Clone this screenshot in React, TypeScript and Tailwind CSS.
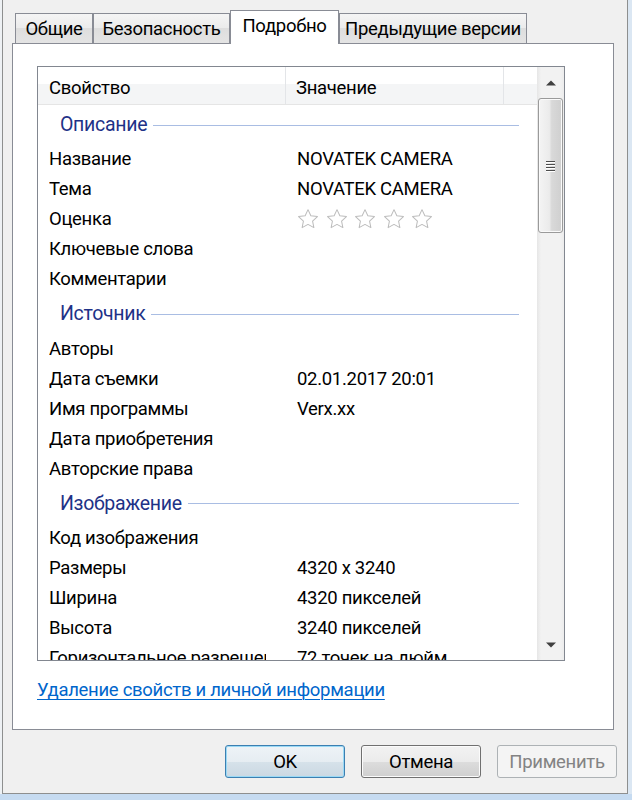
import React from 'react';

type Row =
  | { kind: 'group'; label: string; h: string }
  | { kind: 'item'; name: string; value?: string; stars?: boolean };

const rows: Row[] = [
  { kind: 'group', label: 'Описание', h: 'h-[38px]' },
  { kind: 'item', name: 'Название', value: 'NOVATEK CAMERA' },
  { kind: 'item', name: 'Тема', value: 'NOVATEK CAMERA' },
  { kind: 'item', name: 'Оценка', stars: true },
  { kind: 'item', name: 'Ключевые слова' },
  { kind: 'item', name: 'Комментарии' },
  { kind: 'group', label: 'Источник', h: 'h-[40px]' },
  { kind: 'item', name: 'Авторы' },
  { kind: 'item', name: 'Дата съемки', value: '02.01.2017 20:01' },
  { kind: 'item', name: 'Имя программы', value: 'Verx.xx' },
  { kind: 'item', name: 'Дата приобретения' },
  { kind: 'item', name: 'Авторские права' },
  { kind: 'group', label: 'Изображение', h: 'h-[39px]' },
  { kind: 'item', name: 'Код изображения' },
  { kind: 'item', name: 'Размеры', value: '4320 x 3240' },
  { kind: 'item', name: 'Ширина', value: '4320 пикселей' },
  { kind: 'item', name: 'Высота', value: '3240 пикселей' },
  { kind: 'item', name: 'Горизонтальное разрешение', value: '72 точек на дюйм' },
];

const Star = () => (
  <svg width="22" height="22" viewBox="0 0 24 24">
    <path
      d="M12 1.8l3.1 6.6 7.2.9-5.3 5 1.4 7.1L12 17.9l-6.4 3.5 1.4-7.1-5.3-5 7.2-.9z"
      fill="#fff"
      stroke="#bcbcbc"
      strokeWidth="1.1"
      strokeLinejoin="round"
    />
  </svg>
);

const Arrow = ({ down }: { down?: boolean }) => (
  <svg width="10" height="6" viewBox="0 0 10 6">
    <path d={down ? 'M0 0.5h10L5 5.5z' : 'M0 5.5h10L5 0.5z'} fill="#404040" />
  </svg>
);

const Tab = ({ label, w, active }: { label: string; w: string; active?: boolean }) =>
  active ? (
    <div
      className={`${w} h-[34px] -mb-px relative z-10 bg-white border border-b-0 border-[#898c95] flex items-center justify-center pb-[2px] text-black`}
    >
      {label}
    </div>
  ) : (
    <div
      className={`${w} h-[30px] pt-[2px] bg-[linear-gradient(#f5f5f5,#ebebeb_50%,#dedede_50%,#e4e4e4)] border border-b-0 border-[#898c95] flex items-center justify-center text-black`}
    >
      {label}
    </div>
  );

const Scrollbar = () => (
  <div className="w-[27px] h-full flex flex-col bg-[linear-gradient(90deg,#e6e6e6,#f2f2f2_15%,#f2f2f2_85%,#ececec)]">
    <div className="h-[31px] flex items-center justify-center">
      <Arrow />
    </div>
    <div className="h-[135px] mx-px rounded-[3px] border border-[#9a9a9a] bg-[linear-gradient(90deg,#f4f4f4,#ebebeb_45%,#d9d9d9_55%,#cfcfcf)] shadow-[inset_0_0_0_1px_#fafafa] flex items-center justify-center">
      <div className="flex flex-col gap-[2px]">
        {[0, 1, 2, 3].map((i) => (
          <div key={i} className="w-[9px] h-px bg-[#4d4d4d] shadow-[0_1px_0_#ffffff]" />
        ))}
      </div>
    </div>
    <div className="flex-1" />
    <div className="h-[30px] flex items-center justify-center">
      <Arrow down />
    </div>
  </div>
);

const ListView = () => (
  <div className="ml-[24px] mt-[22px] w-[528px] h-[595px] border border-[#828790] bg-white flex overflow-hidden">
    <div className="flex-1 flex flex-col overflow-hidden">
      <div className="h-[38px] shrink-0 flex border-b border-[#e5e5e5] bg-[linear-gradient(#ffffff,#ffffff_45%,#f4f5f6_45%,#f4f5f6)]">
        <div className="w-[247px] pl-[11px] pt-[6px] flex items-center">Свойство</div>
        <div className="w-px bg-[#e3e5e8]" />
        <div className="w-[217px] pl-[10px] pt-[6px] flex items-center">Значение</div>
        <div className="w-px bg-[#e3e5e8]" />
        <div className="flex-1" />
      </div>
      <div className="flex-1 overflow-hidden">
        {rows.map((r, i) =>
          r.kind === 'group' ? (
            <div key={i} className={`${r.h} pt-[2px] flex items-center pl-[22px] pr-[18px]`}>
              <span className="text-[#1e3287] text-[19.5px] leading-[26px]">{r.label}</span>
              <div className="flex-1 h-px bg-[#a9bde3] ml-[6px]" />
            </div>
          ) : (
            <div key={i} className="h-[30px] pt-[2px] flex items-center">
              <div className="w-[248px] pl-[11px] pr-[20px]">
                <div className="leading-[26px] whitespace-nowrap overflow-hidden">{r.name}</div>
              </div>
              <div className="pl-[11px] leading-[26px] whitespace-nowrap flex items-center">
                {r.stars ? (
                  <div className="flex gap-[6.5px]">
                    {[0, 1, 2, 3, 4].map((s) => (
                      <Star key={s} />
                    ))}
                  </div>
                ) : (
                  r.value
                )}
              </div>
            </div>
          )
        )}
      </div>
    </div>
    <Scrollbar />
  </div>
);

export default function App() {
  return (
    <div className="w-[632px] h-[800px] flex flex-col bg-[#c6dbf1] font-['Roboto',sans-serif] text-[18.5px] tracking-[-0.3px] leading-none text-black">
      <div className="flex h-[794px]">
        <div className="w-[2px] bg-[#eef1f4]" />
        <div className="w-[626px] h-full bg-[#f0f0f0] border-l border-r border-b border-[#8e8f8f] flex flex-col">
          <div className="pt-[10px] pl-[12px] flex items-end h-[43px]">
            <Tab label="Общие" w="w-[78px]" />
            <Tab label="Безопасность" w="w-[137px]" />
            <Tab label="Подробно" w="w-[109px]" active />
            <Tab label="Предыдущие версии" w="w-[188px]" />
          </div>
          <div className="ml-[9px] w-[602px] h-[687px] bg-white border border-[#898c95] flex flex-col">
            <ListView />
            <div className="ml-[24px] mt-[17px] h-[24px] flex items-center">
              <span className="text-[#0066cc] leading-[24px] underline underline-offset-[3px] decoration-1">
                Удаление свойств и личной информации
              </span>
            </div>
          </div>
          <div className="mt-[15px] pr-[10px] flex justify-end gap-[16px]">
            <button className="w-[120px] h-[33px] pt-px rounded-[3px] border border-[#3c7fb1] bg-[linear-gradient(#eef3f7,#e6edf2_50%,#d6e2ea_50%,#cbd8e2)] shadow-[inset_0_0_0_1px_#9ad9f5] text-black">
              OK
            </button>
            <button className="w-[120px] h-[33px] pt-px rounded-[3px] border border-[#707070] bg-[linear-gradient(#f2f2f2,#ebebeb_50%,#dddddd_50%,#cfcfcf)] shadow-[inset_0_0_0_1px_#fbfbfb] text-black">
              Отмена
            </button>
            <button className="w-[120px] h-[33px] pt-px rounded-[3px] border border-[#adb2b5] bg-[#f4f4f4] text-[#838383]">
              Применить
            </button>
          </div>
        </div>
        <div className="w-[4px] bg-[#dbe7f3]" />
      </div>
    </div>
  );
}
